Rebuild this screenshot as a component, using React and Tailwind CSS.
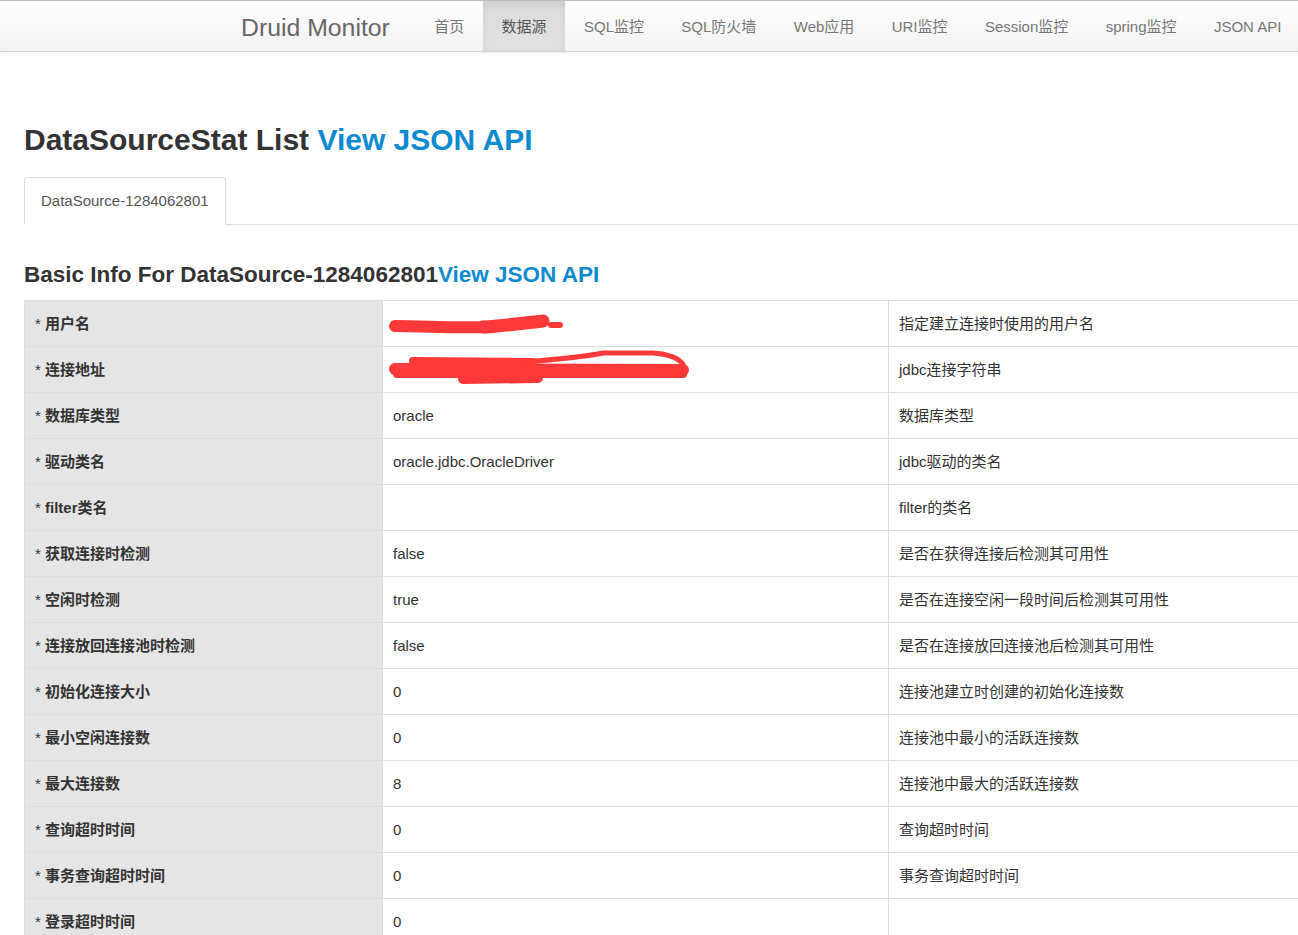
import React from 'react';

const font = { fontFamily: '"Liberation Sans", "Noto Sans CJK SC", Arial, sans-serif' };

const navItems = ['首页', '数据源', 'SQL监控', 'SQL防火墙', 'Web应用', 'URI监控', 'Session监控', 'spring监控', 'JSON API'];

const rows = [
    ['用户名', 'user', '指定建立连接时使用的用户名'],
    ['连接地址', 'url', 'jdbc连接字符串'],
    ['数据库类型', 'oracle', '数据库类型'],
    ['驱动类名', 'oracle.jdbc.OracleDriver', 'jdbc驱动的类名'],
    ['filter类名', '', 'filter的类名'],
    ['获取连接时检测', 'false', '是否在获得连接后检测其可用性'],
    ['空闲时检测', 'true', '是否在连接空闲一段时间后检测其可用性'],
    ['连接放回连接池时检测', 'false', '是否在连接放回连接池后检测其可用性'],
    ['初始化连接大小', '0', '连接池建立时创建的初始化连接数'],
    ['最小空闲连接数', '0', '连接池中最小的活跃连接数'],
    ['最大连接数', '8', '连接池中最大的活跃连接数'],
    ['查询超时时间', '0', '查询超时时间'],
    ['事务查询超时时间', '0', '事务查询超时时间'],
    ['登录超时时间', '0', ''],
    ['连接有效性检查类名', '', ''],
    ['ExceptionSorter类名', '', ''],
];

// red marker over hidden values
function Scribble({ kind }) {
    if (kind === 'user') {
        return (
            <svg className="absolute left-0 top-0" width="300" height="46" viewBox="0 0 300 46">
                <g stroke="#fd3939" strokeLinecap="round" fill="none">
                    <path d="M12 25 C 50 26, 90 27, 110 26" strokeWidth="12" />
                    <path d="M100 26 C 120 25, 140 22, 160 20" strokeWidth="13" />
                    <path d="M150 21 L 161 21" strokeWidth="9" />
                    <path d="M168 24 L 177 24" strokeWidth="6" />
                </g>
            </svg>
        );
    }
    return (
        <svg className="absolute left-0 top-0" width="320" height="46" viewBox="0 0 320 46">
            <g stroke="#fd3939" strokeLinecap="round" fill="none">
                <path d="M12 22 L 300 23" strokeWidth="12" />
                <path d="M14 27 L 300 27" strokeWidth="8" />
                <path d="M30 14 L 150 15" strokeWidth="8" />
                <path d="M80 32 L 155 31" strokeWidth="10" />
                <path d="M140 15 C 180 12, 200 10, 220 6 L 270 6 C 285 7, 295 11, 300 17" strokeWidth="5" />
            </g>
        </svg>
    );
}

function App() {
    return (
        <div className="h-[935px] w-full overflow-hidden bg-white text-[#333]" style={font}>
            {/* top navbar */}
            <div className="flex h-[52px] w-full border-t border-b border-t-[#bdbdbd] border-b-[#d4d4d4] bg-gradient-to-b from-white to-[#f2f2f2] shadow-[0_1px_4px_rgba(0,0,0,0.08)]">
                <div className="ml-[241px] flex w-[174.5px] shrink-0 items-center pt-[3px] text-[24.8px] text-[#666]">Druid Monitor</div>
                <div className="flex items-stretch">
                    {navItems.map((item) => (
                        <div
                            key={item}
                            className={item === '数据源'
                                ? 'flex items-center px-[18.7px] pt-[3px] text-[15px] text-[#555] bg-gradient-to-b from-[#dbdbdb] to-[#e2e2e2] shadow-[inset_0_3px_9px_rgba(0,0,0,0.075)] whitespace-nowrap'
                                : 'flex items-center px-[18.7px] pt-[3px] text-[15px] text-[#777] whitespace-nowrap'}
                        >
                            {item}
                        </div>
                    ))}
                </div>
            </div>

            <div className="pl-[24px]">
                <h1 className="mt-[71px] text-[30px] leading-[33px] font-bold whitespace-nowrap">
                    DataSourceStat List <span className="text-[#0e8ad2]">View JSON API</span>
                </h1>

                <div className="mt-[21px] flex h-[48px] w-[1400px] border-b border-[#ddd]">
                    <div className="-mb-px flex h-[48px] items-center rounded-t-[4px] border border-[#ddd] border-b-white bg-white px-[16px] text-[15px] text-[#555]">
                        DataSource-1284062801
                    </div>
                </div>

                <h3 className="mt-[37px] mb-[13px] text-[22.5px] leading-[25px] font-bold whitespace-nowrap">
                    Basic Info For DataSource-1284062801<span className="text-[#0e8ad2]">View JSON API</span>
                </h3>

                <table className="w-[1500px] table-fixed border-collapse text-[15px]">
                    <colgroup>
                        <col className="w-[358px]" />
                        <col className="w-[506px]" />
                        <col />
                    </colgroup>
                    <tbody>
                        {rows.map(([label, value, desc]) => (
                            <tr key={label} className="h-[46px]">
                                <td className="border border-[#ddd] bg-[#e5e5e5] px-[10px] pt-[2px] align-middle font-bold whitespace-nowrap">
                                    <span className="font-normal">* </span>{label}
                                </td>
                                <td className="relative border border-[#ddd] px-[10px] pt-[2px] align-middle whitespace-nowrap">
                                    {value === 'user' || value === 'url' ? <Scribble kind={value} /> : value}
                                </td>
                                <td className="border border-[#ddd] px-[10px] pt-[2px] align-middle whitespace-nowrap">{desc}</td>
                            </tr>
                        ))}
                    </tbody>
                </table>
            </div>
        </div>
    );
}

export default App;
